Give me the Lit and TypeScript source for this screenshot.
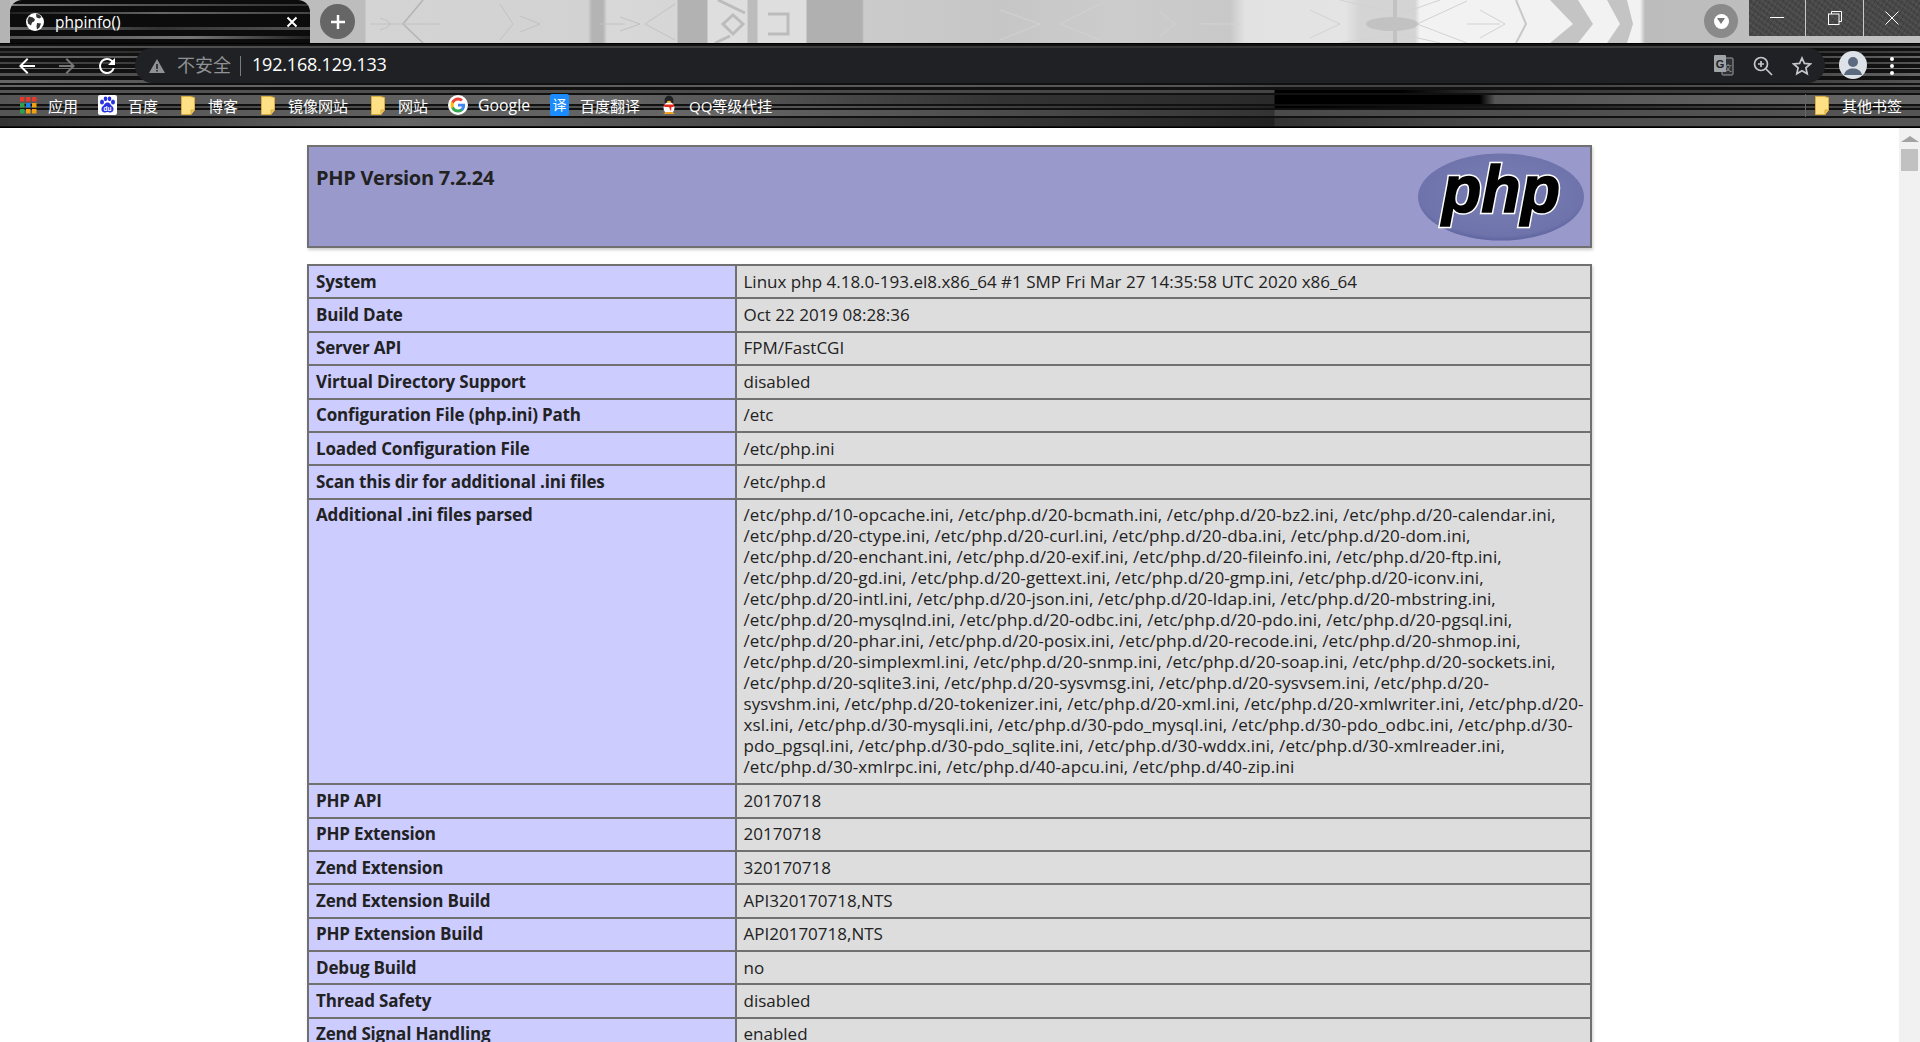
import { LitElement, html, css, svg } from 'lit';
import { customElement } from 'lit/decorators.js';

const ini = [
  '/etc/php.d/10-opcache.ini, /etc/php.d/20-bcmath.ini, /etc/php.d/20-bz2.ini, /etc/php.d/20-calendar.ini,',
  '/etc/php.d/20-ctype.ini, /etc/php.d/20-curl.ini, /etc/php.d/20-dba.ini, /etc/php.d/20-dom.ini,',
  '/etc/php.d/20-enchant.ini, /etc/php.d/20-exif.ini, /etc/php.d/20-fileinfo.ini, /etc/php.d/20-ftp.ini,',
  '/etc/php.d/20-gd.ini, /etc/php.d/20-gettext.ini, /etc/php.d/20-gmp.ini, /etc/php.d/20-iconv.ini,',
  '/etc/php.d/20-intl.ini, /etc/php.d/20-json.ini, /etc/php.d/20-ldap.ini, /etc/php.d/20-mbstring.ini,',
  '/etc/php.d/20-mysqlnd.ini, /etc/php.d/20-odbc.ini, /etc/php.d/20-pdo.ini, /etc/php.d/20-pgsql.ini,',
  '/etc/php.d/20-phar.ini, /etc/php.d/20-posix.ini, /etc/php.d/20-recode.ini, /etc/php.d/20-shmop.ini,',
  '/etc/php.d/20-simplexml.ini, /etc/php.d/20-snmp.ini, /etc/php.d/20-soap.ini, /etc/php.d/20-sockets.ini,',
  '/etc/php.d/20-sqlite3.ini, /etc/php.d/20-sysvmsg.ini, /etc/php.d/20-sysvsem.ini, /etc/php.d/20-',
  'sysvshm.ini, /etc/php.d/20-tokenizer.ini, /etc/php.d/20-xml.ini, /etc/php.d/20-xmlwriter.ini, /etc/php.d/20-',
  'xsl.ini, /etc/php.d/30-mysqli.ini, /etc/php.d/30-pdo_mysql.ini, /etc/php.d/30-pdo_odbc.ini, /etc/php.d/30-',
  'pdo_pgsql.ini, /etc/php.d/30-pdo_sqlite.ini, /etc/php.d/30-wddx.ini, /etc/php.d/30-xmlreader.ini,',
  '/etc/php.d/30-xmlrpc.ini, /etc/php.d/40-apcu.ini, /etc/php.d/40-zip.ini',
];

const rows: [string, string | string[]][] = [
  ['System', 'Linux php 4.18.0-193.el8.x86_64 #1 SMP Fri Mar 27 14:35:58 UTC 2020 x86_64'],
  ['Build Date', 'Oct 22 2019 08:28:36'],
  ['Server API', 'FPM/FastCGI'],
  ['Virtual Directory Support', 'disabled'],
  ['Configuration File (php.ini) Path', '/etc'],
  ['Loaded Configuration File', '/etc/php.ini'],
  ['Scan this dir for additional .ini files', '/etc/php.d'],
  ['Additional .ini files parsed', ini],
  ['PHP API', '20170718'],
  ['PHP Extension', '20170718'],
  ['Zend Extension', '320170718'],
  ['Zend Extension Build', 'API320170718,NTS'],
  ['PHP Extension Build', 'API20170718,NTS'],
  ['Debug Build', 'no'],
  ['Thread Safety', 'disabled'],
  ['Zend Signal Handling', 'enabled'],
];

const folder = html`<svg width="14" height="19" viewBox="0 0 14 19">
  <path d="M.5 .5h8.5l4.5 1v12.5l-3.5 4.5H.5z" fill="#ffe084" stroke="#d9ae3a" />
  <path d="M10 18.5v-4.500h3.500" fill="#f4c95a" stroke="#d9ae3a" />
</svg>`;

const appColors = ['#e8392c', '#e8392c', '#e8392c', '#2f9e4f', '#1f86e8', '#f0a010', '#2f9e4f', '#f0a010', '#f0a010'];
const apps = html`<svg width="17" height="17" viewBox="0 0 17 17">
  ${appColors.map(
    (c, i) => svg`<rect x=${(i % 3) * 6} y=${Math.floor(i / 3) * 6} width="4.500" height="4.500" fill=${c} />`
  )}
</svg>`;

const baidu = html`<svg width="19" height="20" viewBox="0 0 19 20">
  <rect width="19" height="20" rx="2" fill="#fff" />
  <g fill="#2932e1">
    <ellipse cx="4" cy="7" rx="2" ry="2.500" />
    <ellipse cx="7.500" cy="3.800" rx="1.800" ry="2.400" />
    <ellipse cx="11.500" cy="3.800" rx="1.800" ry="2.400" />
    <ellipse cx="15" cy="7" rx="2" ry="2.500" />
    <path d="M9.500 7.500c2.500 0 3 2.500 5 4 2 2 1 6-2 6-1.500 0-2-.5-3-.5s-1.500 .5-3 .5c-3 0-4-4-2-6 2-1.500 2.500-4 5-4z" />
  </g>
  <text x="9.500" y="15.500" font-size="6.500" font-family="Liberation Sans" font-weight="700" fill="#fff" text-anchor="middle">du</text>
</svg>`;

const google = html`<svg width="20" height="20" viewBox="0 0 48 48">
  <circle cx="24" cy="24" r="24" fill="#fff" />
  <path fill="#4285f4" d="M41 24.500c0-1.300-.1-2.500-.3-3.600H24v6.900h9.600c-.4 2.200-1.700 4.100-3.500 5.300v4.500h5.700c3.300-3.100 5.200-7.600 5.200-13.100z" />
  <path fill="#34a853" d="M24 42c4.700 0 8.700-1.600 11.800-4.300l-5.700-4.500c-1.600 1.100-3.600 1.700-6.100 1.700-4.600 0-8.500-3.100-9.900-7.300H8.200v4.600C11.200 38 17.100 42 24 42z" />
  <path fill="#fbbc05" d="M14.100 27.600c-.4-1.100-.6-2.300-.6-3.600s.2-2.500.6-3.600v-4.600H8.200C7 18.200 6.300 21 6.300 24s.7 5.800 1.900 8.200z" />
  <path fill="#ea4335" d="M24 13.100c2.600 0 5 .9 6.800 2.700l5.100-5.100C32.700 7.900 28.700 6 24 6c-6.900 0-12.800 4-15.800 9.800l5.900 4.600c1.400-4.200 5.300-7.300 9.900-7.300z" />
</svg>`;

const qq = html`<svg width="18" height="22" viewBox="0 0 18 20">
  <ellipse cx="9" cy="6" rx="4.500" ry="5.500" fill="#222" />
  <ellipse cx="9" cy="13" rx="5.500" ry="6" fill="#fff" />
  <path d="M3.500 9.500h11l-1 2.500h-2l-.5 4.500-2-4.500h-4.500z" fill="#e0281c" />
  <ellipse cx="9" cy="6.800" rx="2" ry="1" fill="#f4b020" />
  <path d="M3 19l3-2h6l3 2z" fill="#f4a020" />
</svg>`;

const marks = [
  { icon: apps, label: '应用' },
  { icon: baidu, label: '百度' },
  { icon: folder, label: '博客', kind: 'dir' },
  { icon: folder, label: '镜像网站', kind: 'dir' },
  { icon: folder, label: '网站', kind: 'dir' },
  { icon: google, label: 'Google', kind: 'latin' },
  { icon: html`<span class="yi">译</span>`, label: '百度翻译' },
  { icon: qq, label: 'QQ等级代挂' },
];

@customElement('app-root')
export class AppRoot extends LitElement {
  static styles = css`
    :host {
      display: flex;
      flex-direction: column;
      height: 1042px;
      overflow: hidden;
      background: #fff;
      font-family: 'Open Sans', 'Noto Sans CJK SC', sans-serif;
    }

    /* tab strip: theme photo, roughly */
    .strip {
      height: 43px;
      display: flex;
      align-items: stretch;
      flex: none;
      background:
        url("data:image/svg+xml,%3csvg xmlns='http://www.w3.org/2000/svg' width='1920' height='43' fill='none'%3e%3cg stroke='%23b4b4b4' stroke-width='1'%3e%3cpath d='M423 0L403 24L423 43' stroke-width='1.500'/%3e%3c/g%3e%3cg stroke='%23c2c2c2' stroke-width='1'%3e%3cpath d='M370 24H440M380 18Q400 24 380 30M500 4L513 24L500 40M520 16L540 24L520 32M600 24H625M645 24L675 4M645 24L675 40M620 17L640 24L620 31'/%3e%3c/g%3e%3cg stroke='%23bcbcbc' stroke-width='3'%3e%3cpath d='M733 15L743 24L733 34L723 24Z'/%3e%3cpath d='M718 0L745 13M715 43L730 36M768 14H788V34H768'/%3e%3c/g%3e%3cg stroke='%23d2d2d2' stroke-width='1'%3e%3cpath d='M1000 10L1040 24L1000 40M1100 4L1060 24L1100 40M1160 12L1175 24L1160 36M1200 24H1240M1310 10L1340 24L1310 38'/%3e%3cpath d='M1417 24L1467 1M1417 24L1467 43M1467 24L1500 24M1480 10L1505 24L1480 38M1340 0L1400 14M1440 0L1400 14M1340 43L1400 34M1440 43L1400 34'/%3e%3c/g%3e%3cellipse cx='1392' cy='24' rx='26' ry='7' fill='%23c2c2c2'/%3e%3cpath d='M1395 0V43' stroke='%23c2c2c2' stroke-width='4'/%3e%3cpath d='M1516 0L1526 24L1516 43' stroke='%23c8c8c8' stroke-width='2'/%3e%3cpath d='M1550 0H1578L1593 24L1578 43H1550L1573 24Z' fill='%23c4c4c4'/%3e%3cpath d='M1607 0H1627L1633 24L1627 43H1607L1620 24Z' fill='%23c4c4c4'/%3e%3c/svg%3e")
          0 0 no-repeat,
        linear-gradient(
          90deg,
          #bdbdbd 0,
          #bdbdbd 365px,
          #d4d4d4 366px,
          #d2d2d2 588px,
          #b4b4b4 592px,
          #b4b4b4 603px,
          #d8d8d8 607px,
          #d6d6d6 677px,
          #b2b2b2 678px,
          #b2b2b2 707px,
          #dedede 708px,
          #dedede 747px,
          #bcbcbc 748px,
          #bcbcbc 757px,
          #dedede 758px,
          #dedede 806px,
          #b0b0b0 807px,
          #b0b0b0 862px,
          #cbcbcb 864px,
          #c6c6c6 1000px,
          #ccc 1120px,
          #c8c8c8 1230px,
          #e2e2e2 1245px,
          #e4e4e4 1345px,
          #d4d4d4 1360px,
          #d4d4d4 1415px,
          #f2f2f2 1420px,
          #f2f2f2 1640px,
          #bcbcbc 1645px,
          #c0c0c0 1920px
        );
    }
    .stub {
      width: 10px;
      background: #b4b4b4;
    }
    .tab {
      width: 300px;
      margin-right: 10px;
      border-radius: 12px 12px 0 0;
      display: flex;
      align-items: center;
      padding: 0 0 0 16px;
      box-sizing: border-box;
      gap: 11px;
      color: #fff;
      font-size: 15.500px;
      background:
        linear-gradient(90deg, #777, #555 40%, #333 100%) 0 4px / 100% 2px no-repeat,
        linear-gradient(90deg, #222, #666 50%, #444 100%) 0 12px / 100% 2px no-repeat,
        linear-gradient(90deg, #666, #333 50%, #555 100%) 0 27px / 100% 3px no-repeat,
        linear-gradient(90deg, #555, #777 60%, #222 100%) 0 36px / 100% 3px no-repeat,
        #0c0c0c;
    }
    .tab .title {
      flex: 1;
    }
    .tab .close {
      margin-right: 12px;
      display: flex;
    }
    .newtab {
      width: 35px;
      height: 35px;
      margin-top: 4px;
      border-radius: 50%;
      background: #666;
      display: flex;
      align-items: center;
      justify-content: center;
    }
    .spacer {
      flex: 1;
    }
    .ext {
      width: 34px;
      height: 34px;
      margin: 4px 11px 0 0;
      border-radius: 50%;
      background: #8a8a8a;
      display: flex;
      align-items: center;
      justify-content: center;
    }
    .ext i {
      width: 15px;
      height: 15px;
      border-radius: 50%;
      background: #fff;
      display: flex;
      align-items: center;
      justify-content: center;
    }
    .ext i::after {
      content: '';
      border: 4.500px solid transparent;
      border-top: 6px solid #777;
      border-bottom: 0;
    }
    .win {
      display: flex;
      height: 36px;
      background:
        repeating-linear-gradient(37deg, rgba(255, 255, 255, 0.05) 0 2px, transparent 2px 5px),
        repeating-linear-gradient(-61deg, rgba(0, 0, 0, 0.12) 0 1px, transparent 1px 4px),
        #474747;
    }
    .win > div {
      display: flex;
      align-items: center;
      justify-content: center;
      border-left: 1px solid #c8c8c8;
    }
    .win > div:first-child {
      border-left: 0;
    }
    .win .min {
      width: 56px;
    }
    .win .max {
      width: 57px;
    }
    .win .cls {
      width: 56px;
    }

    /* streaky lower browser chrome, black notch from 1275 to 1480 */
    .lower {
      flex: none;
      height: 85px;
      display: flex;
      flex-direction: column;
      background:
        linear-gradient(#000, #000) 0 0 / 100% 1px no-repeat,
        linear-gradient(90deg, #555, #444 30%, #333 60%, #444 95%, #555 100%) 0 3px / 100% 2px no-repeat,
        linear-gradient(90deg, #333, #222 30%, #222 90%, #444 100%) 0 8px / 100% 2px no-repeat,
        linear-gradient(90deg, #666, #333 30%, #333 90%, #666 100%) 0 13px / 100% 2px no-repeat,
        linear-gradient(90deg, #444, #222 30%, #222 90%, #555 100%) 0 19px / 100% 2px no-repeat,
        linear-gradient(90deg, #777, #333 30%, #333 90%, #777 100%) 0 25px / 100% 1px no-repeat,
        linear-gradient(90deg, #555, #333 30%, #333 90%, #666 100%) 0 30px / 100% 3px no-repeat,
        linear-gradient(90deg, #666, #333 30%, #333 90%, #555 100%) 0 37px / 100% 3px no-repeat,
        linear-gradient(90deg, #666 0, #555 1200px, #444 1274px, #444 1480px, #555 1900px) 0 42px / 100% 2px no-repeat,
        linear-gradient(90deg, #555 0, #444 1274px, #000 1275px, #000 1400px, #3a3a3a 1500px, #444 100%) 0 47px / 100% 3px no-repeat,
        linear-gradient(90deg, #555 0, #666 600px, #333 1000px, #2a2a2a 1274px, #000 1275px, #000 1480px, #555 1495px, #666 100%) 0 52px / 100% 9px no-repeat,
        linear-gradient(90deg, #444 0, #555 800px, #222 1274px, #000 1275px, #000 1300px, #444 1800px) 0 63px / 100% 2px no-repeat,
        linear-gradient(90deg, #555 0, #666 700px, #333 1274px, #4a4a4a 1275px, #555 1920px) 0 67px / 100% 6px no-repeat,
        linear-gradient(90deg, #333 0, #666 400px, #444 800px, #222 1274px, #333 1275px, #4a4a4a 1500px, #555 1920px) 0 75px / 100% 8px no-repeat,
        linear-gradient(#000, #000) 0 84px / 100% 1px no-repeat,
        #111;
    }
    .toolbar {
      height: 45px;
      flex: none;
      display: flex;
      box-sizing: border-box;
      padding-top: 5px;
      color: #fff;
    }
    .navs {
      width: 135px;
      height: 35px;
      display: flex;
      align-items: center;
      padding-left: 15px;
      gap: 16px;
      box-sizing: border-box;
    }
    .omni {
      width: 1690px;
      height: 35px;
      background: #202124;
      border-radius: 18px;
      display: flex;
      align-items: center;
      padding-left: 14px;
      box-sizing: border-box;
    }
    .insecure {
      margin-left: 12px;
      color: #8f9194;
      font-size: 18px;
      line-height: 33px;
    }
    .sep {
      width: 1px;
      height: 20px;
      background: #7a7c80;
      margin: 0 11px 0 9px;
    }
    .url {
      font-size: 18px;
      letter-spacing: -0.2px;
      line-height: 33px;
      align-self: flex-start;
      flex: 1;
    }
    .omni .ic {
      display: flex;
      margin-right: 19px;
    }
    .omni .ic:last-child {
      margin-right: 13px;
    }
    .avatar {
      width: 28px;
      height: 28px;
      margin: 3px 0 0 14px;
      border-radius: 50%;
      background: #dde1e8;
      display: flex;
      overflow: hidden;
    }
    .dots {
      margin: 8px 0 0 22px;
      display: flex;
    }
    .marks {
      display: flex;
      align-items: center;
      height: 34px;
      padding-left: 20px;
      gap: 20px;
      color: #fff;
      font-size: 15px;
    }
    .mark {
      display: flex;
      align-items: center;
      gap: 11px;
      white-space: nowrap;
    }
    .mark svg {
      display: block;
    }
    .mark.dir {
      gap: 13px;
      margin-left: 3px;
    }
    .mark.latin {
      gap: 10px;
      font-size: 15.800px;
    }
    .mark.last {
      margin-left: auto;
      padding-right: 18px;
    }
    .marks .rule {
      width: 1px;
      height: 23px;
      background: #666;
      margin: 0 -4px 0 0;
    }
    .yi {
      width: 19px;
      height: 22px;
      border-radius: 2px;
      background: #1a8cff;
      color: #fff;
      font-size: 14px;
      line-height: 22px;
      text-align: center;
    }

    /* page */
    .view {
      flex: 1;
      min-height: 0;
      display: flex;
      overflow: hidden;
    }
    .page {
      flex: 1;
      min-width: 0;
      padding: 17px 0 0 307px;
      color: #222;
      font-size: 17px;
    }
    .sheet {
      width: 1285px;
      display: flex;
      flex-direction: column;
      gap: 16px;
    }
    .head {
      height: 103px;
      box-sizing: border-box;
      background: #99c;
      border: 2px solid #707070;
      box-shadow: 1px 2px 3px #ccc;
      display: flex;
      justify-content: space-between;
      padding: 17px 4px 0 7px;
    }
    .head h1 {
      margin: 0;
      font-size: 20px;
      line-height: 28px;
      font-weight: 700;
      letter-spacing: -0.3px;
    }
    .head svg {
      margin-top: -12px;
    }
    table {
      width: 100%;
      border-collapse: collapse;
      table-layout: fixed;
      box-shadow: 1px 2px 3px #ccc;
    }
    td {
      border: 2px solid #707070;
      padding: 4.600px 7px 5.800px;
      line-height: 21px;
      white-space: nowrap;
      vertical-align: baseline;
    }
    td.e {
      width: 411.500px;
      background: #ccf;
      font-weight: 700;
      letter-spacing: -0.17px;
    }
    td.v {
      background: #ddd;
    }
    .lines {
      letter-spacing: 0.1px;
    }
    .scroll {
      width: 21px;
      flex: none;
      background: #f1f1f1;
      display: flex;
      flex-direction: column;
      align-items: center;
    }
    .scroll .up {
      margin-top: 8px;
      border: 5px solid transparent;
      border-bottom: 6px solid #a3a3a3;
      border-left-width: 9px;
      border-right-width: 9px;
      border-top: 0;
    }
    .scroll .thumb {
      width: 17px;
      height: 22px;
      margin-top: 7px;
      background: #c1c1c1;
    }
  `;

  render() {
    return html`
      <div class="strip">
        <div class="stub"></div>
        <div class="tab">
          <svg width="18" height="18" viewBox="0 0 18 18">
            <circle cx="9" cy="9" r="9" fill="#fff" />
            <path d="M3 3.500l4 1 2 2-1 2-2 1-1 3-3-2-.5-3.500zM10 1l3 .5 2.500 2.500-2 1.500-3-1zM11 10l4 .5-1.500 4-2.500 2-.5-3z" fill="#333" />
          </svg>
          <span class="title">phpinfo()</span>
          <span class="close">
            <svg width="12" height="12" viewBox="0 0 12 12"><path d="M1.500 1.500l9 9M10.500 1.500l-9 9" stroke="#fff" stroke-width="2" /></svg>
          </span>
        </div>
        <div class="newtab">
          <svg width="16" height="16" viewBox="0 0 16 16"><path d="M8 1v14M1 8h14" stroke="#fff" stroke-width="2.500" /></svg>
        </div>
        <div class="spacer"></div>
        <div class="ext"><i></i></div>
        <div class="win">
          <div class="min"><svg width="14" height="2"><rect width="14" height="1" fill="#fff" /></svg></div>
          <div class="max">
            <svg width="14" height="14" viewBox="0 0 14 14" fill="none" stroke="#fff"><path d="M3.500 3V.5h10v10H11" /><rect x=".5" y="3" width="10.500" height="10.500" /></svg>
          </div>
          <div class="cls">
            <svg width="14" height="14" viewBox="0 0 14 14"><path d="M.5 .5l13 13M13.500 .5l-13 13" stroke="#fff" /></svg>
          </div>
        </div>
      </div>

      <div class="lower">
        <div class="toolbar">
          <div class="navs">
            <svg width="24" height="24" viewBox="0 0 24 24"><path d="M20 11H7.800l5.600-5.600L12 4l-8 8 8 8 1.400-1.400L7.800 13H20z" fill="#fff" /></svg>
            <svg width="24" height="24" viewBox="0 0 24 24"><path d="M12 4l-1.400 1.400 5.600 5.600H4v2h12.200l-5.600 5.600L12 20l8-8z" fill="#777" /></svg>
            <svg width="24" height="24" viewBox="0 0 24 24"><path d="M17.650 6.350A7.960 7.960 0 0 0 12 4a8 8 0 1 0 7.730 10h-2.080A6 6 0 1 1 12 6c1.660 0 3.140.69 4.220 1.780L13 11h7V4z" fill="#fff" /></svg>
          </div>
          <div class="omni">
            <svg width="16" height="16" viewBox="0 0 16 16"><path d="M8 1l8 14H0zM7.200 6v5h1.600V6zm0 6v1.600h1.600V12z" fill="#8f9194" fill-rule="evenodd" /></svg>
            <span class="insecure">不安全</span>
            <span class="sep"></span>
            <span class="url">192.168.129.133</span>
            <span class="ic">
              <svg width="20" height="22" viewBox="0 0 20 22">
                <rect x="8" y="3" width="11" height="17" rx="1" fill="#303134" stroke="#9aa0a6" />
                <rect x="0" y="0" width="12" height="17" rx="1" fill="#a0a3a8" />
                <text x="6" y="13" font-size="11" font-weight="700" font-family="Liberation Sans" text-anchor="middle" fill="#202124">G</text>
                <text x="14" y="16" font-size="8" font-family="Noto Sans CJK SC" text-anchor="middle" fill="#9aa0a6">文</text>
              </svg>
            </span>
            <span class="ic">
              <svg width="20" height="20" viewBox="0 0 20 20" fill="none" stroke="#c4c7cc" stroke-width="1.700">
                <circle cx="8" cy="8" r="6.500" /><path d="M13 13l6 6M8 5v6M5 8h6" />
              </svg>
            </span>
            <span class="ic">
              <svg width="20" height="20" viewBox="0 0 20 20"><path d="M10 2l2.400 5.400 5.900.6-4.400 3.900 1.300 5.800L10 14.700l-5.200 3 1.300-5.800L1.700 8l5.900-.6z" fill="none" stroke="#c4c7cc" stroke-width="1.700" /></svg>
            </span>
          </div>
          <div class="avatar">
            <svg width="28" height="28" viewBox="0 0 28 28" fill="#5c6a80"><circle cx="14" cy="11" r="5" /><path d="M5 24c1-5 5-6.500 9-6.500s8 1.500 9 6.500z" /></svg>
          </div>
          <div class="dots">
            <svg width="6" height="20" viewBox="0 0 6 20" fill="#fff"><circle cx="3" cy="3" r="2" /><circle cx="3" cy="10" r="2" /><circle cx="3" cy="17" r="2" /></svg>
          </div>
        </div>
        <div class="marks">
          ${marks.map((m) => html`<div class="mark ${m.kind ?? ''}">${m.icon}<span>${m.label}</span></div>`)}
          <div class="mark last dir"><span class="rule"></span>${folder}<span>其他书签</span></div>
        </div>
      </div>

      <div class="view">
        <div class="page">
          <div class="sheet">
            <div class="head">
              <h1>PHP Version 7.2.24</h1>
              <svg width="170" height="90" viewBox="0 0 170 90">
                <defs>
                  <radialGradient id="lg" cx="50%" cy="45%" r="62%">
                    <stop offset="0" stop-color="#7a7fb5" />
                    <stop offset="0.8" stop-color="#6e73ab" />
                    <stop offset="1" stop-color="#4c5490" />
                  </radialGradient>
                </defs>
                <ellipse cx="85" cy="45" rx="83" ry="43.500" fill="url(#lg)" />
                <g
                  font-family="Liberation Sans"
                  font-weight="700"
                  font-style="italic"
                  font-size="66"
                  text-anchor="middle"
                >
                  <text x="85" y="60" textLength="118" lengthAdjust="spacingAndGlyphs" fill="#fff" stroke="#fff" stroke-width="4.500">php</text>
                  <text x="85" y="60" textLength="118" lengthAdjust="spacingAndGlyphs" fill="#000" stroke="#000" stroke-width="1.500">php</text>
                </g>
              </svg>
            </div>
            <table>
              ${rows.map(
                ([k, v]) => html`<tr>
                  <td class="e">${k}</td>
                  <td class="v">${Array.isArray(v) ? html`<div class="lines">${v.map((l) => html`${l}<br />`)}</div>` : v}</td>
                </tr>`
              )}
            </table>
          </div>
        </div>
        <div class="scroll"><div class="up"></div><div class="thumb"></div></div>
      </div>
    `;
  }
}
